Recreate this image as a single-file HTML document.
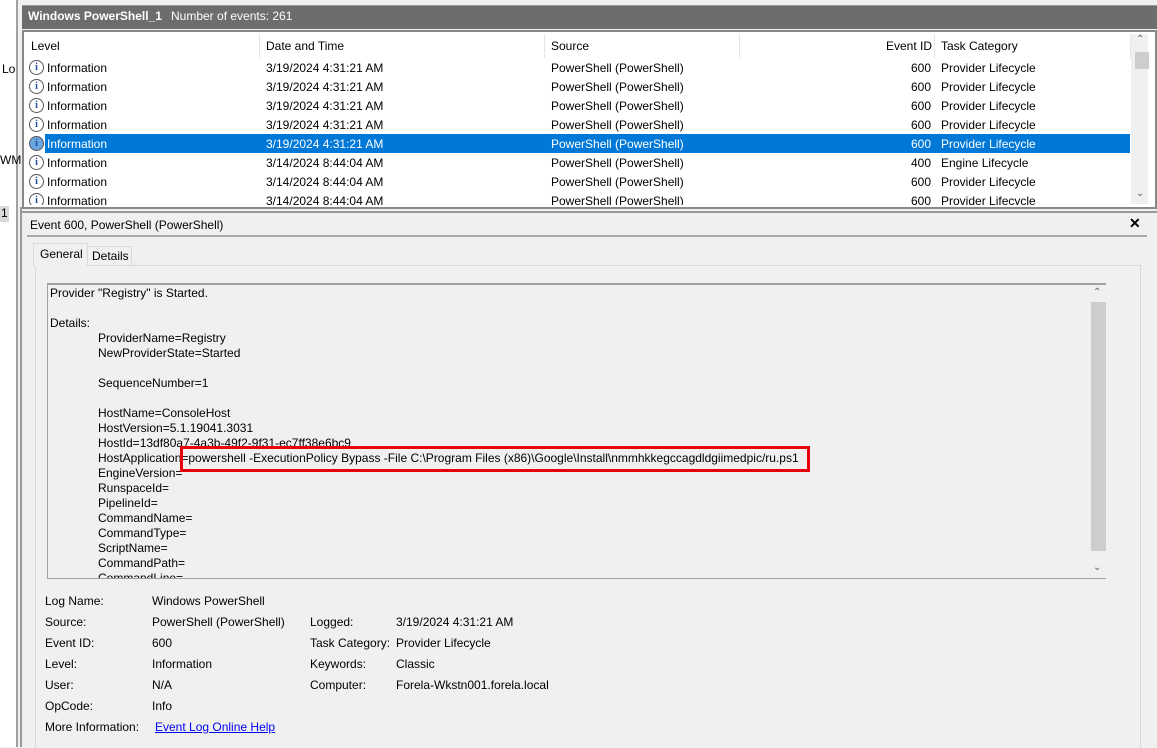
<!DOCTYPE html>
<html><head><style>
body{margin:0;width:1157px;height:747px;background:#f0f0f0;font-family:"Liberation Sans",sans-serif;font-size:12px;color:#000;position:relative;overflow:hidden}
.a{position:absolute;white-space:nowrap}
.ic{position:absolute;width:13px;height:13px;border:1px solid #555;border-radius:50%;background:#fff;font:bold 10px "Liberation Serif",serif;color:#1f4e9a;text-align:center;line-height:13px}
.r{position:absolute;left:25px;width:1105px;height:19px}
.r span{position:absolute;top:3px}
</style></head><body>
<div class="a" style="left:0;top:0;width:16px;height:747px;background:#fff"></div>
<div class="a" style="left:16px;top:0;width:2px;height:747px;background:#a0a0a0"></div>
<div class="a" style="left:2px;top:62px">Lo</div>
<div class="a" style="left:0;top:153px">WM</div>
<div class="a" style="left:0;top:206px;width:9px;height:16px;background:#d9d9d9"></div>
<div class="a" style="left:1px;top:206px">1</div>
<div class="a" style="left:22px;top:5px;width:1135px;height:23px;background:#6d6d6d;border-top:1px solid #999"></div>
<div class="a" style="left:28px;top:9px;color:#fff;font-weight:bold">Windows PowerShell_1</div>
<div class="a" style="left:171px;top:9px;color:#fff">Number of events: 261</div>
<div class="a" style="left:22px;top:30px;width:1131px;height:175px;border:2px solid #888;background:#fff"></div>
<div class="a" style="left:31px;top:39px">Level</div>
<div class="a" style="left:259px;top:34px;width:1px;height:24px;background:#e5e5e5"></div>
<div class="a" style="left:266px;top:39px">Date and Time</div>
<div class="a" style="left:544px;top:34px;width:1px;height:24px;background:#e5e5e5"></div>
<div class="a" style="left:551px;top:39px">Source</div>
<div class="a" style="left:739px;top:34px;width:1px;height:24px;background:#e5e5e5"></div>
<div class="a" style="left:886px;top:39px">Event ID</div>
<div class="a" style="left:934px;top:34px;width:1px;height:24px;background:#e5e5e5"></div>
<div class="a" style="left:941px;top:39px">Task Category</div>
<div class="a" style="left:1130px;top:34px;width:1px;height:24px;background:#e5e5e5"></div>
<div class="a" style="left:1131px;top:34px;width:17px;height:170px;background:#f0f0f0"></div>
<div class="a" style="left:1135px;top:52px;width:14px;height:17px;background:#cdcdcd"></div>
<div class="a" style="left:1136px;top:34px;color:#606060;font-size:10px">&#8963;</div>
<div class="a" style="left:1136px;top:188px;color:#606060;font-size:10px">&#8964;</div>

<div class="r" style="top:58px"><div class="ic" style="left:4px;top:2px">i</div><span style="left:22px">Information</span><span style="left:241px">3/19/2024 4:31:21 AM</span><span style="left:526px">PowerShell (PowerShell)</span><span style="left:886px">600</span><span style="left:916px">Provider Lifecycle</span></div>
<div class="r" style="top:77px"><div class="ic" style="left:4px;top:2px">i</div><span style="left:22px">Information</span><span style="left:241px">3/19/2024 4:31:21 AM</span><span style="left:526px">PowerShell (PowerShell)</span><span style="left:886px">600</span><span style="left:916px">Provider Lifecycle</span></div>
<div class="r" style="top:96px"><div class="ic" style="left:4px;top:2px">i</div><span style="left:22px">Information</span><span style="left:241px">3/19/2024 4:31:21 AM</span><span style="left:526px">PowerShell (PowerShell)</span><span style="left:886px">600</span><span style="left:916px">Provider Lifecycle</span></div>
<div class="r" style="top:115px"><div class="ic" style="left:4px;top:2px">i</div><span style="left:22px">Information</span><span style="left:241px">3/19/2024 4:31:21 AM</span><span style="left:526px">PowerShell (PowerShell)</span><span style="left:886px">600</span><span style="left:916px">Provider Lifecycle</span></div>
<div class="r" style="top:134px;color:#fff"><div class="a" style="left:20px;top:0;width:1085px;height:19px;background:#0078d7"></div><div class="ic" style="left:4px;top:2px;background:#6aa6e0">i</div><span style="left:22px">Information</span><span style="left:241px">3/19/2024 4:31:21 AM</span><span style="left:526px">PowerShell (PowerShell)</span><span style="left:886px">600</span><span style="left:916px">Provider Lifecycle</span></div>
<div class="r" style="top:153px"><div class="ic" style="left:4px;top:2px">i</div><span style="left:22px">Information</span><span style="left:241px">3/14/2024 8:44:04 AM</span><span style="left:526px">PowerShell (PowerShell)</span><span style="left:886px">400</span><span style="left:916px">Engine Lifecycle</span></div>
<div class="r" style="top:172px"><div class="ic" style="left:4px;top:2px">i</div><span style="left:22px">Information</span><span style="left:241px">3/14/2024 8:44:04 AM</span><span style="left:526px">PowerShell (PowerShell)</span><span style="left:886px">600</span><span style="left:916px">Provider Lifecycle</span></div>
<div class="r" style="top:191px;height:14px;overflow:hidden"><div class="ic" style="left:4px;top:2px">i</div><span style="left:22px">Information</span><span style="left:241px">3/14/2024 8:44:04 AM</span><span style="left:526px">PowerShell (PowerShell)</span><span style="left:886px">600</span><span style="left:916px">Provider Lifecycle</span></div>

<div class="a" style="left:22px;top:211px;width:1135px;height:2px;background:#999"></div>
<div class="a" style="left:20px;top:207px;width:2px;height:540px;background:#999"></div>
<div class="a" style="left:30px;top:218px">Event 600, PowerShell (PowerShell)</div>
<div class="a" style="left:1129px;top:215px;font-weight:bold;font-size:14px">✕</div>
<div class="a" style="left:27px;top:235px;width:1120px;height:2px;background:#a8a8a8"></div>
<div class="a" style="left:35px;top:265px;width:1104px;height:482px;border:1px solid #d9d9d9;border-bottom:0"></div>
<div class="a" style="left:33px;top:243px;width:53px;height:22px;background:#f0f0f0;border:1px solid #d9d9d9;border-bottom:0"></div>
<div class="a" style="left:40px;top:247px">General</div>
<div class="a" style="left:87px;top:246px;width:43px;height:19px;border:1px solid #d9d9d9;border-bottom:0"></div>
<div class="a" style="left:92px;top:249px">Details</div>
<div class="a" style="left:47px;top:283px;width:1058px;height:293px;border:1px solid #a0a0a0;border-right:0;border-top:2px solid #a0a0a0;overflow:hidden;line-height:15px">
<div style="position:absolute;left:2px;top:1px;white-space:pre">Provider "Registry" is Started.

Details:
<span style="padding-left:48px">ProviderName=Registry</span>
<span style="padding-left:48px">NewProviderState=Started</span>

<span style="padding-left:48px">SequenceNumber=1</span>

<span style="padding-left:48px">HostName=ConsoleHost</span>
<span style="padding-left:48px">HostVersion=5.1.19041.3031</span>
<span style="padding-left:48px">HostId=13df80a7-4a3b-49f2-9f31-ec7ff38e6bc9</span>
<span style="padding-left:48px">HostApplication=powershell -ExecutionPolicy Bypass -File C:\Program Files (x86)\Google\Install\nmmhkkegccagdldgiimedpic/ru.ps1</span>
<span style="padding-left:48px">EngineVersion=</span>
<span style="padding-left:48px">RunspaceId=</span>
<span style="padding-left:48px">PipelineId=</span>
<span style="padding-left:48px">CommandName=</span>
<span style="padding-left:48px">CommandType=</span>
<span style="padding-left:48px">ScriptName=</span>
<span style="padding-left:48px">CommandPath=</span>
<span style="padding-left:48px">CommandLine=</span></div>
<div class="a" style="left:1042px;top:0;width:16px;height:293px;background:#f0f0f0"></div>
<div class="a" style="left:1043px;top:17px;width:15px;height:249px;background:#cdcdcd"></div>
<div class="a" style="left:1045px;top:0;color:#606060;font-size:10px">&#8963;</div>
<div class="a" style="left:1045px;top:275px;color:#606060;font-size:10px">&#8964;</div>
</div>
<div class="a" style="left:180px;top:446px;width:624px;height:20px;border:3px solid #e8000b"></div>

<div class="a" style="left:45px;top:594px">Log Name:</div><div class="a" style="left:152px;top:594px">Windows PowerShell</div>
<div class="a" style="left:45px;top:615px">Source:</div><div class="a" style="left:152px;top:615px">PowerShell (PowerShell)</div>
<div class="a" style="left:310px;top:615px">Logged:</div><div class="a" style="left:396px;top:615px">3/19/2024 4:31:21 AM</div>
<div class="a" style="left:45px;top:636px">Event ID:</div><div class="a" style="left:152px;top:636px">600</div>
<div class="a" style="left:310px;top:636px">Task Category:</div><div class="a" style="left:396px;top:636px">Provider Lifecycle</div>
<div class="a" style="left:45px;top:657px">Level:</div><div class="a" style="left:152px;top:657px">Information</div>
<div class="a" style="left:310px;top:657px">Keywords:</div><div class="a" style="left:396px;top:657px">Classic</div>
<div class="a" style="left:45px;top:678px">User:</div><div class="a" style="left:152px;top:678px">N/A</div>
<div class="a" style="left:310px;top:678px">Computer:</div><div class="a" style="left:396px;top:678px">Forela-Wkstn001.forela.local</div>
<div class="a" style="left:45px;top:699px">OpCode:</div><div class="a" style="left:152px;top:699px">Info</div>
<div class="a" style="left:45px;top:720px">More Information:</div><div class="a" style="left:155px;top:720px;color:#0000ee;text-decoration:underline">Event Log Online Help</div>
</body></html>
